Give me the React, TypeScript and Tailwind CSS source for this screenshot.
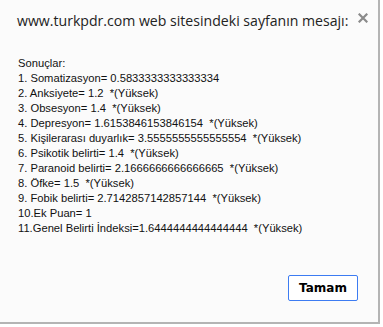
import React from "react";

const lines = [
  "Sonuçlar:",
  "1. Somatizasyon= 0.5833333333333334",
  "2. Anksiyete= 1.2  *(Yüksek)",
  "3. Obsesyon= 1.4  *(Yüksek)",
  "4. Depresyon= 1.6153846153846154  *(Yüksek)",
  "5. Kişilerarası duyarlık= 3.5555555555555554  *(Yüksek)",
  "6. Psikotik belirti= 1.4  *(Yüksek)",
  "7. Paranoid belirti= 2.1666666666666665  *(Yüksek)",
  "8. Öfke= 1.5  *(Yüksek)",
  "9. Fobik belirti= 2.7142857142857144  *(Yüksek)",
  "10.Ek Puan= 1",
  "11.Genel Belirti İndeksi=1.6444444444444444  *(Yüksek)",
];

export default function App() {
  return (
    <div className="w-[383px] h-[327px] bg-white">
      <div className="w-[380px] h-[324px] bg-[#fbfbfb] border-r-2 border-b-2 border-[#b4b4b4] flex flex-col">
        <div className="flex items-start justify-between pl-[17px] pr-[10px] pt-[11px]">
          <div className="text-[14.1px] leading-[20px] text-[#222] font-['Open_Sans',sans-serif]">
            www.turkpdr.com web sitesindeki sayfanın mesajı:
          </div>
          <svg width="10" height="10" viewBox="0 0 10 10" className="mt-[2px]">
            <path d="M1.5 1.5 L8.5 8.5 M8.5 1.5 L1.5 8.5" stroke="#8a8a8a" strokeWidth="2.2" strokeLinecap="square" />
          </svg>
        </div>
        <div className="pl-[18px] pt-[25px] text-[11.2px] leading-[15px] text-[#111] whitespace-pre font-['Liberation_Sans',sans-serif]">
          {lines.map((l, i) => (
            <div key={i}>{l}</div>
          ))}
        </div>
        <div className="flex justify-end pr-[20px] pt-[39px]">
          <button className="w-[70px] h-[26px] bg-white border border-[#3d7cf2] rounded-[2px] text-[12px] font-bold text-black font-['DejaVu_Sans',sans-serif]">
            Tamam
          </button>
        </div>
      </div>
    </div>
  );
}
